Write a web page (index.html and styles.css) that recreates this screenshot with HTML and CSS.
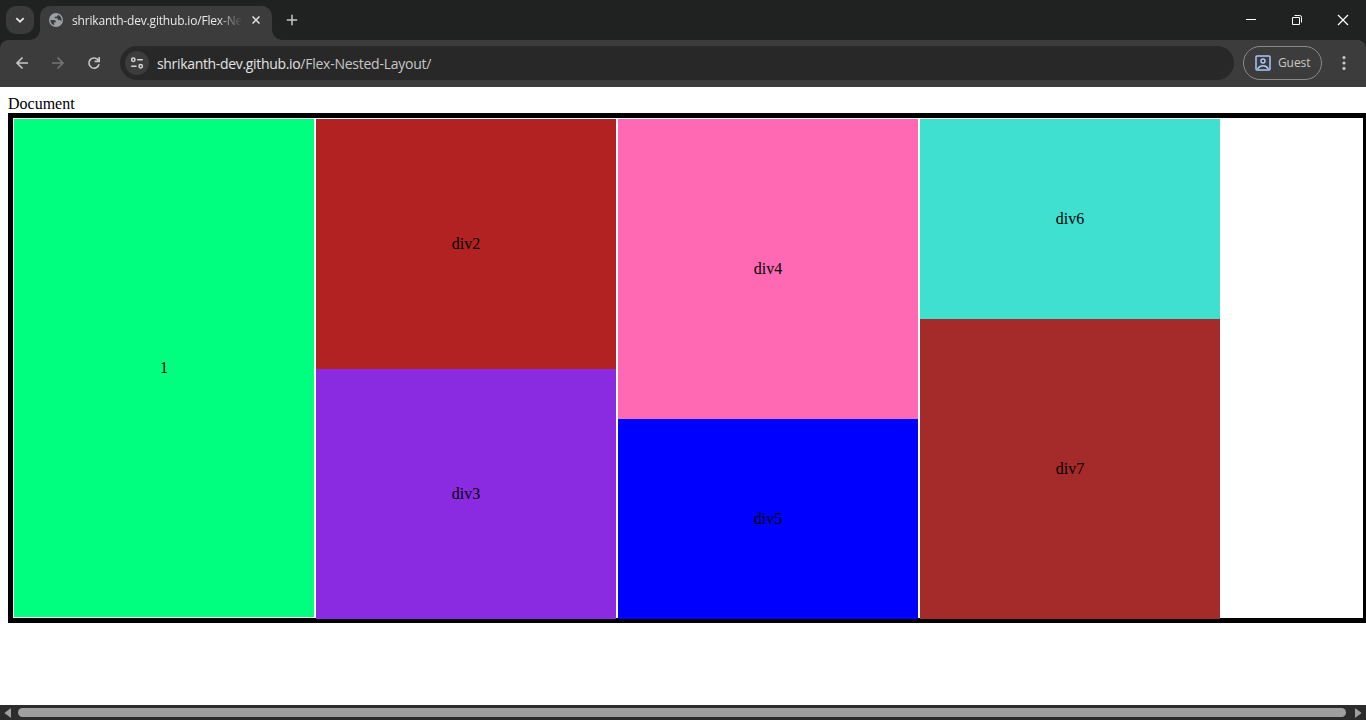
FILE: index.html
```html
<!DOCTYPE html>
<html lang="en">
<head>
<meta charset="utf-8">
<title>Document</title>
<link rel="stylesheet" href="styles.css">
</head>
<body>
<header class="titlebar">
  <div class="tab-search"><svg width="28" height="28" viewBox="0 0 28 28"><path d="M10.300 12.200l3.700 3.500 3.700-3.500" fill="none" stroke="#e3e3e3" stroke-width="1.800"/></svg></div>
  <div class="tab">
    <svg class="globe" width="14" height="14" viewBox="0 0 14 14"><circle cx="7" cy="7" r="7" fill="#9aa0a6"/><path d="M1.400 7H4.500C6 7 7 7.900 7 9.200H5.200V12.300C3 11.600 1.400 9.500 1.400 7zM8.800 1.700V2.300C8.800 3.200 8.200 3.700 7.300 3.700H5.700V5.300H7.600C8.700 5.300 8.900 6.100 8.900 7.100H10.400C11.300 7.100 11.700 7.700 12.300 8.600C13.300 5.400 11.600 2.600 8.800 1.700z" fill="#3c3c3c"/></svg>
    <span class="tab-title">shrikanth-dev.github.io/Flex-Ne</span>
    <svg class="tab-close" width="8" height="8" viewBox="0 0 8 8"><path d="M.5.5l7 7m0-7l-7 7" stroke="#e3e3e3" stroke-width="1.500"/></svg>
  </div>
  <svg class="new-tab" width="12" height="12" viewBox="0 0 12 12"><path d="M6 .8v10.400M.8 6h10.400" stroke="#c7c7c7" stroke-width="1.500"/></svg>
  <div class="window-controls">
    <svg width="46" height="40" viewBox="0 0 46 40"><path d="M18 19.500h10" stroke="#fff"/></svg>
    <svg width="46" height="40" viewBox="0 0 46 40"><path d="M18.500 17.500h7v7h-7zM20.500 15.500h5.200q1.800 0 1.800 1.800v5.200" fill="none" stroke="#fff"/></svg>
    <svg width="46" height="40" viewBox="0 0 46 40"><path d="M18 15l10 10m0-10L18 25" stroke="#fff" stroke-width="1.200"/></svg>
  </div>
</header>
<nav class="toolbar">
  <svg class="nav-icon" width="36" height="36" viewBox="0 0 36 36"><path d="M23 18H12m5.500-5.500L12 18l5.500 5.500" fill="none" stroke="#c7c7c7" stroke-width="1.600"/></svg>
  <svg class="nav-icon" width="36" height="36" viewBox="0 0 36 36"><path d="M11 18h11m-5.500-5.500L22 18l-5.500 5.500" fill="none" stroke="#757575" stroke-width="1.600"/></svg>
  <svg class="nav-icon" width="36" height="36" viewBox="0 0 36 36"><path d="M21.300 15.300A5.100 5.100 0 1 0 22 19.200M22.200 12v4.400h-4.600" fill="none" stroke="#c7c7c7" stroke-width="1.600"/></svg>
  <div class="omnibox">
    <div class="site-info"><svg width="24" height="24" viewBox="0 0 24 24"><g fill="none" stroke="#d5d5d5" stroke-width="1.500"><circle cx="8.300" cy="8.800" r="1.700"/><path d="M12.200 8.800h5.600M6.200 15.200h5.300"/><circle cx="15.700" cy="15.200" r="1.700"/></g></svg></div>
    <div class="url"><span class="host">shrikanth-dev.github.io</span><span class="path">/Flex-Nested-Layout/</span></div>
  </div>
  <div class="profile">
    <svg width="16" height="16" viewBox="0 0 16 16"><g fill="none" stroke="#a8c7fa" stroke-width="1.500"><rect x="1" y="1" width="14" height="14" rx="1"/><circle cx="8" cy="6" r="2"/><path d="M2.500 14c2.800-4.200 8.200-4.200 11 0"/></g></svg>
    <span>Guest</span>
  </div>
  <svg class="menu" width="4" height="16" viewBox="0 0 4 16"><g fill="#c7c7c7"><circle cx="2" cy="2.600" r="1.600"/><circle cx="2" cy="8" r="1.600"/><circle cx="2" cy="13.400" r="1.600"/></g></svg>
</nav>
<main class="viewport">
  <div class="document">Document</div>
  <div class="container">
    <div class="box one">1</div>
    <div class="column"><div class="box div2">div2</div><div class="box div3">div3</div></div>
    <div class="column"><div class="box div4">div4</div><div class="box div5">div5</div></div>
    <div class="column"><div class="box div6">div6</div><div class="box div7">div7</div></div>
  </div>
</main>
<footer class="scrollbar">
  <svg width="8" height="10" viewBox="0 0 8 10"><path d="M7 .6v8.800Q7 10 6 9.300L1 5.600Q.2 5 1 4.400L6 .7Q7 0 7 .6z" fill="#9f9f9f"/></svg>
  <div class="thumb"></div>
  <svg width="8" height="10" viewBox="0 0 8 10"><path d="M1 .6v8.800Q1 10 2 9.300L7 5.600Q7.800 5 7 4.400L2 .7Q1 0 1 .6z" fill="#9f9f9f"/></svg>
</footer>
</body>
</html>
```
FILE: styles.css
```css
* { box-sizing: border-box; }
body {
  margin: 0;
  width: 1366px;
  height: 720px;
  overflow: hidden;
  display: flex;
  flex-direction: column;
  background: #fff;
  font: 16px/18px "Liberation Serif", "Times New Roman", serif;
  color: #000;
}
svg { display: block; flex: none; }
.titlebar {
  height: 40px;
  flex: none;
  display: flex;
  align-items: center;
  padding-left: 6px;
  background: #202221;
}
.tab-search {
  width: 28px;
  height: 28px;
  border-radius: 10px;
  background: #3a3a3a;
}
.tab {
  position: relative;
  align-self: flex-end;
  width: 232px;
  height: 34px;
  margin-left: 6px;
  padding: 0 12px 6px 9px;
  display: flex;
  align-items: center;
  border-radius: 10px 10px 0 0;
  background: #3c3c3c;
}
.tab::before, .tab::after {
  content: "";
  position: absolute;
  bottom: 0;
  width: 10px;
  height: 10px;
}
.tab::before { left: -10px; background: radial-gradient(circle at 0 0, transparent 9.500px, #3c3c3c 10px); }
.tab::after { right: -10px; background: radial-gradient(circle at 100% 0, transparent 9.500px, #3c3c3c 10px); }
.tab-title {
  width: 170px;
  margin-left: 9px;
  padding-top: 2px;
  white-space: nowrap;
  font: 12px/18px "Open Sans", "Noto Sans", sans-serif;
  letter-spacing: -0.18px;
  color: #e8e8e8;
  -webkit-mask-image: linear-gradient(90deg, #000 146px, transparent 170px);
  mask-image: linear-gradient(90deg, #000 146px, transparent 170px);
}
.tab-close { margin-left: auto; }
.new-tab { margin-left: 14px; }
.window-controls { display: flex; margin-left: auto; }
.toolbar {
  height: 47px;
  flex: none;
  display: flex;
  align-items: center;
  padding: 0 20px 0 5px;
  background:
    radial-gradient(circle at 8px 8px, #3c3c3c 7.500px, #202221 8px) 0 0 / 8px 8px no-repeat,
    radial-gradient(circle at 0 8px, #3c3c3c 7.500px, #202221 8px) 100% 0 / 8px 8px no-repeat,
    #3c3c3c;
}
.nav-icon { margin-bottom: 1px; }
.omnibox {
  width: 1114px;
  height: 34px;
  margin: 0 0 1px 7px;
  padding-left: 5px;
  display: flex;
  align-items: center;
  border-radius: 17px;
  background: #282828;
}
.site-info {
  width: 24px;
  height: 24px;
  display: grid;
  place-items: center;
  border-radius: 50%;
  background: #3c3c3c;
}
.url {
  margin-left: 8px;
  padding-top: 1px;
  font: 14px/20px "Open Sans", "Noto Sans", sans-serif;
  white-space: nowrap;
}
.host { color: #e3e3e3; letter-spacing: -0.33px; }
.path { color: #c7c7c7; letter-spacing: -0.25px; }
.profile {
  width: 79px;
  height: 34px;
  margin: 0 0 1px 9px;
  padding-left: 11px;
  display: flex;
  align-items: center;
  gap: 7px;
  border: 1px solid #8a8a8a;
  border-radius: 17px;
  font: 12px/18px "Open Sans", "Noto Sans", sans-serif;
  letter-spacing: -0.1px;
  color: #c7c7c7;
}
.menu { margin: 0 0 1px auto; }
.viewport {
  flex: 1;
  min-height: 0;
  padding: 8px 0 0 8px;
  overflow: hidden;
}
.container {
  width: 1360px;
  height: 510px;
  display: flex;
  border: 5px solid #000;
}
.column { width: 300px; height: 500px; margin: 1px; flex: none; }
.box { display: flex; align-items: center; justify-content: center; }
.one { width: 300px; margin: 1px; flex: none; background: springgreen; }
.div2 { height: 250px; background: #b22222; }
.div3 { height: 250px; background: blueviolet; }
.div4 { height: 300px; background: hotpink; }
.div5 { height: 200px; background: blue; }
.div6 { height: 200px; background: turquoise; }
.div7 { height: 300px; background: brown; }
.scrollbar {
  height: 15px;
  flex: none;
  display: flex;
  align-items: center;
  justify-content: space-between;
  padding: 0 4px;
  background: #2c2c2c;
}
.thumb { width: 1328px; height: 9px; margin-right: 2px; border-radius: 5px; background: #9f9f9f; }
```
